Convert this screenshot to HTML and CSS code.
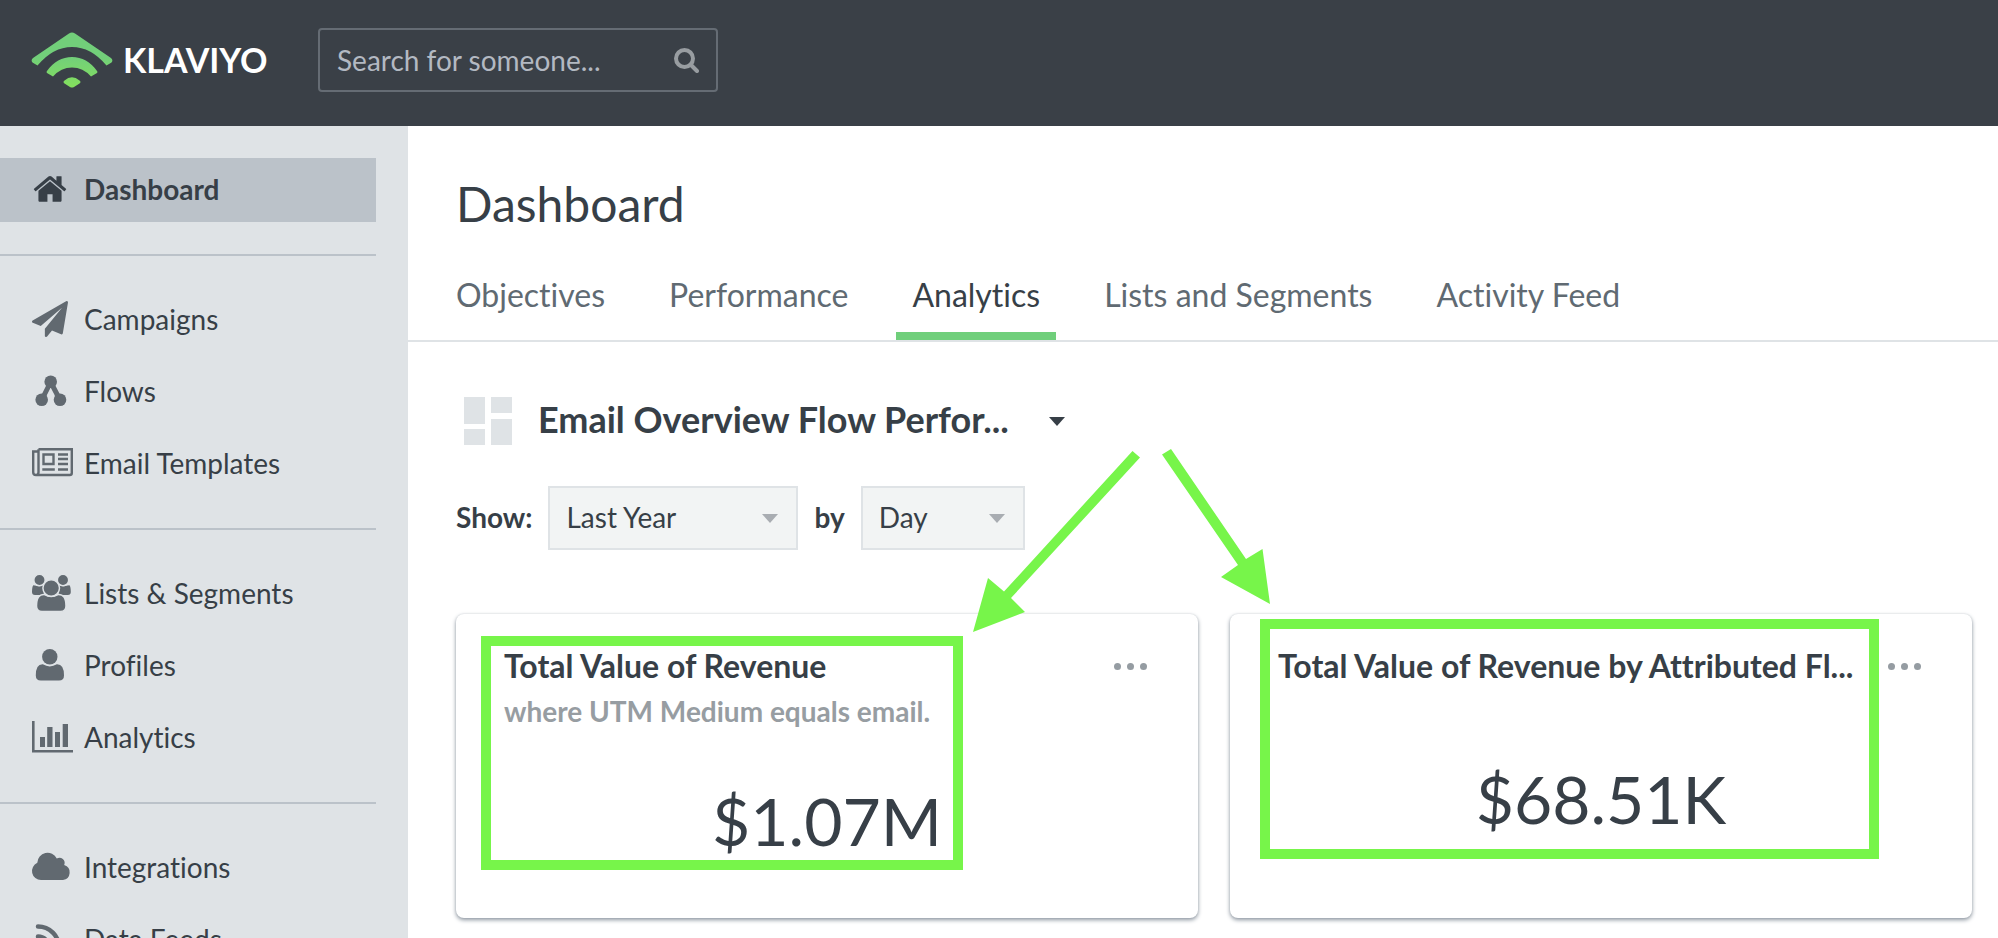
FILE: index.html
```html
<!DOCTYPE html>
<html lang="en">
<head>
<meta charset="utf-8">
<title>Dashboard | Klaviyo</title>
<link rel="stylesheet" href="styles.css">
</head>
<body>
<div class="app">
  <header class="topbar">
    <a class="brand" href="#">
      <svg class="brand-mark" viewBox="0 0 82 56" aria-hidden="true">
        <defs>
          <linearGradient id="mark" x1="0" y1="0" x2="0" y2="56" gradientUnits="userSpaceOnUse">
            <stop offset="0.45" stop-color="#72cf7a"/>
            <stop offset="1" stop-color="#84e05c"/>
          </linearGradient>
        </defs>
        <g fill="url(#mark)">
          <path d="M38 1.500Q41 -0.500 44 1.500L80 26Q82.500 28 80.500 30.500L75.500 33.500Q60 15 41 15Q22 15 6.500 33.500L1.500 30.500Q-0.500 28 2 26Z"/>
          <path d="M16 39Q26 25 41 25Q56 25 66 39Q67 40 66 41L60 44.500Q52 35.500 41 35.500Q30 35.500 22 44.500L16 41Q15 40 16 39Z"/>
          <path d="M33.500 48.500Q41 42 48.500 48.500Q50.500 50 48.500 51.500L43 55Q41 56 39 55L33.500 51.500Q31.500 50 33.500 48.500Z"/>
        </g>
      </svg>
      <span class="brand-name">KLAVIYO</span>
    </a>
    <form class="search">
      <input class="search-input" type="text" placeholder="Search for someone..." aria-label="Search for someone">
      <button class="search-button" type="button" aria-label="Search">
        <svg viewBox="0 0 25 25" width="25" height="25"><circle cx="10.500" cy="10.500" r="8.500" fill="none" stroke="currentColor" stroke-width="4"/><path d="M17 17l6 6" stroke="currentColor" stroke-width="4" stroke-linecap="round"/></svg>
      </button>
    </form>
  </header>

  <div class="body">
    <nav class="sidebar">
      <ul class="nav-group">
        <li><a class="nav-item active" href="#">
          <svg class="icon" viewBox="0 0 42 36"><path transform="scale(.02009)" d="M1472 992v480q0 26-19 45t-45 19h-384v-384h-256v384h-384q-26 0-45-19t-19-45v-480q0-1 .5-3t.5-3l575-474 575 474q1 2 1 6zm223-69l-62 74q-8 9-21 11h-3q-13 0-21-7l-692-577-692 577q-12 8-24 7-13-2-21-11l-62-74q-8-10-7-23.500t11-21.500l719-599q32-26 76-26t76 26l244 204v-195q0-14 9-23t23-9h192q14 0 23 9t9 23v408l219 182q10 8 11 21.500t-7 23.500z"/></svg>
          Dashboard</a></li>
      </ul>
      <ul class="nav-group">
        <li><a class="nav-item" href="#">
          <svg class="icon" viewBox="0 0 42 36"><path transform="scale(.02009)" d="M1764 11q33 24 27 64l-256 1536q-5 29-32 45-14 8-31 8-11 0-24-5l-453-185-242 295q-18 23-49 23-13 0-22-4-19-7-30.500-23.500t-11.500-36.500v-349l864-1059-1069 925-395-162q-37-14-40-55-2-40 32-59l1664-960q15-9 32-9 20 0 36 11z"/></svg>
          Campaigns</a></li>
        <li><a class="nav-item" href="#">
          <svg class="icon" viewBox="0 0 42 36"><path d="M9.700 27L18.700 9L28 27" fill="none" stroke="currentColor" stroke-width="5"/><circle cx="18.700" cy="8.700" r="6.300"/><circle cx="9.700" cy="26.700" r="6.300"/><circle cx="28" cy="26.700" r="6.300"/></svg>
          Flows</a></li>
        <li><a class="nav-item" href="#">
          <svg class="icon" viewBox="0 0 42 36"><g fill="none" stroke="currentColor" stroke-width="2.400"><path d="M6.500 4.200H39.800V28a2 2 0 0 1-2 2H4a2.800 2.800 0 0 1-2.800-2.800V6.500H6.500M6.500 4.200V27.200A2.800 2.800 0 0 1 4 30"/><path d="M11.500 9.500h10v9.500h-10zM26 9.500h10M26 14h10M26 19h10M10.300 24.500h12.500M26 24.500h10"/></g></svg>
          Email Templates</a></li>
      </ul>
      <ul class="nav-group">
        <li><a class="nav-item" href="#">
          <svg class="icon" viewBox="0 0 42 36"><g stroke="#dfe3e6" stroke-width="1.500"><path stroke="none" d="M3 10.500q4 1.500 8-.3l1 9.800H3q-3 0-3-3 0-5 1.300-6.800zM35.500 10.500q-4 1.500-8-.3l-1 9.800h9.300q3 0 3-3 0-5-1.300-6.800z"/><circle cx="7.500" cy="5" r="5.700"/><circle cx="31" cy="5" r="5.700"/><path d="M12.500 19.500q6.700 4 13.500 0 8-.5 8 11.500 0 5.500-5.500 5.500H10q-5.500 0-5.500-5.500 0-12 8-11.500z"/><circle cx="19.200" cy="13" r="8.300"/></g></svg>
          Lists &amp; Segments</a></li>
        <li><a class="nav-item" href="#">
          <svg class="icon" viewBox="0 0 42 36"><circle cx="17.800" cy="9.700" r="7.700"/><path d="M10.800 17.300q7 4.200 14 0 7.200-.3 7.200 11.200 0 5-5 5H8.800q-5 0-5-5 0-11.500 7-11.200z"/></svg>
          Profiles</a></li>
        <li><a class="nav-item" href="#">
          <svg class="icon" viewBox="0 0 42 36"><path d="M0 2h2.600v29H41v2.600H0zM8 18h5v10H8zM15.200 8h5.300v20h-5.300zM23 13h5v15h-5zM30.700 5h5.300v23h-5.300z"/></svg>
          Analytics</a></li>
      </ul>
      <ul class="nav-group">
        <li><a class="nav-item" href="#">
          <svg class="icon" viewBox="0 0 42 36"><path d="M9 31a9 9 0 0 1-3.700-17.200A10.300 10.300 0 0 1 24.800 9.500a5.200 5.200 0 0 1 7.400 6.500A7.700 7.700 0 0 1 31 31z"/></svg>
          Integrations</a></li>
        <li><a class="nav-item" href="#">
          <svg class="icon" viewBox="0 0 42 36"><g fill="none" stroke="currentColor" stroke-width="4.500" stroke-linecap="round"><path d="M6 5.500A21 21 0 0 1 27 26.500M6 15.500A11 11 0 0 1 17 26.500"/></g><circle cx="7.500" cy="25" r="3.500"/></svg>
          Data Feeds</a></li>
      </ul>
    </nav>

    <main class="main">
      <h1 class="page-title">Dashboard</h1>
      <nav class="tabs">
        <a class="tab" href="#">Objectives</a>
        <a class="tab" href="#">Performance</a>
        <a class="tab selected" href="#">Analytics</a>
        <a class="tab" href="#">Lists and Segments</a>
        <a class="tab" href="#">Activity Feed</a>
      </nav>
      <div class="content">
        <button class="board-picker" type="button">
          <svg class="board-icon" viewBox="0 0 48 48"><path d="M0 0h21v27H0zM0 32h21v16H0zM27 0h21v16H27zM27 22h21v26H27z"/></svg>
          <span class="board-name">Email Overview Flow Perfor...</span>
          <svg class="caret" viewBox="0 0 16 9"><path d="M0 0h16L8 9z"/></svg>
        </button>
        <div class="filters">
          <label for="range">Show:</label>
          <span class="select range"><select id="range"><option>Last Year</option></select><svg class="caret" viewBox="0 0 16 9"><path d="M0 0h16L8 9z"/></svg></span>
          <label for="unit">by</label>
          <span class="select unit"><select id="unit"><option>Day</option></select><svg class="caret" viewBox="0 0 16 9"><path d="M0 0h16L8 9z"/></svg></span>
        </div>
        <div class="cards">
          <section class="card">
            <header class="card-head">
              <h2 class="card-title">Total Value of Revenue</h2>
              <button class="more" type="button" aria-label="More options"><i></i><i></i><i></i></button>
            </header>
            <p class="card-sub">where UTM Medium equals email.</p>
            <p class="value">$1.07M</p>
            <div class="highlight first"></div>
          </section>
          <section class="card">
            <header class="card-head">
              <h2 class="card-title">Total Value of Revenue by Attributed Fl...</h2>
              <button class="more" type="button" aria-label="More options"><i></i><i></i><i></i></button>
            </header>
            <p class="value">$68.51K</p>
            <div class="highlight second"></div>
          </section>
          <svg class="arrows" viewBox="968 445 308 192" aria-hidden="true">
            <path d="M1132.500 451L1140 457.500L1011 598L1025 612L973 632L988 578L1004 591.500Z"/>
            <path d="M1162 454.500L1171 449L1246 559L1262.500 549L1270 604L1221 577L1238 565Z"/>
          </svg>
        </div>
      </div>
    </main>
  </div>
</div>
</body>
</html>
```

FILE: styles.css
```css
* { box-sizing: border-box; }

body {
  margin: 0;
  font-family: Lato, "Open Sans", sans-serif;
  font-size: 28px;
  font-variant-ligatures: none;
  color: #373f47;
  background: #fff;
}

a { color: inherit; text-decoration: none; }
h1, h2, p, ul { margin: 0; padding: 0; }
ul { list-style: none; }
button, input, select { font: inherit; color: inherit; }
button { border: 0; padding: 0; background: none; cursor: pointer; }

.app {
  display: flex;
  flex-direction: column;
  height: 100vh;
  overflow: hidden;
}

.topbar {
  display: flex;
  flex: none;
  align-items: flex-start;
  height: 126px;
  padding: 28px 31px;
  background: #3a4047;
}

.brand {
  display: flex;
  align-items: center;
  gap: 10px;
  width: 287px;
  height: 64px;
  color: #fff;
}
.brand-mark { width: 82px; height: 56px; }
.brand-name { font-size: 34px; font-weight: 700; line-height: 40px; }

.search {
  display: flex;
  align-items: center;
  width: 400px;
  height: 64px;
  border: 2px solid #656c74;
  border-radius: 4px;
  padding: 0 17px;
}
.search-input {
  flex: 1;
  min-width: 0;
  border: 0;
  padding: 0;
  background: none;
  outline: 0;
}
.search-input::placeholder { color: #b3b9c2; opacity: 1; }
.search-button { display: flex; color: #989da1; }

.body { display: flex; flex: 1; min-height: 0; }

.sidebar {
  flex: none;
  width: 408px;
  padding: 32px 32px 0 0;
  background: #dfe3e6;
  overflow: hidden;
}
.nav-group {
  display: flex;
  flex-direction: column;
  gap: 8px;
  padding-bottom: 32px;
}
.nav-group + .nav-group { border-top: 2px solid #bbc2c9; padding-top: 32px; }
.nav-item {
  display: flex;
  align-items: center;
  gap: 10px;
  height: 64px;
  padding: 0 0 2px 32px;
}
.nav-item.active { background: #bbc2c9; font-weight: 700; }
.icon { width: 42px; height: 36px; fill: currentColor; color: #616970; overflow: visible; }
.active .icon { color: #373f47; }

.main { flex: 1; min-width: 0; overflow: hidden; }
.page-title {
  padding: 46px 48px 0;
  font-size: 48px;
  font-weight: 400;
  line-height: 64px;
}
.tabs {
  display: flex;
  gap: 32px;
  height: 106px;
  padding: 39px 32px 0;
  border-bottom: 2px solid #dfe3e6;
  font-size: 32px;
  line-height: 40px;
  color: #606a72;
}
.tab { padding: 0 16px; }
.tab.selected { color: #373f47; border-bottom: 8px solid #70cf7b; }

.content { padding: 48px 26px 0 48px; }
.board-picker {
  display: flex;
  align-items: center;
  height: 62px;
  padding-left: 8px;
  font-size: 36px;
  font-weight: 700;
}
.board-icon { width: 48px; height: 48px; margin-right: 26px; fill: #dfe3e6; }
.board-name { padding-bottom: 4px; }
.board-picker .caret { margin-left: 40px; }
.caret { width: 16px; height: 9px; fill: #373f47; }

.filters {
  display: flex;
  align-items: center;
  gap: 16px;
  margin-top: 34px;
}
.filters label { padding-bottom: 2px; font-weight: 700; }
.select { position: relative; height: 64px; }
.select select {
  appearance: none;
  width: 100%;
  height: 100%;
  padding: 0 16px 2px;
  border: 2px solid #dfe3e6;
  border-radius: 0;
  background: #f2f4f4;
}
.select .caret {
  position: absolute;
  right: 20px;
  top: 28px;
  fill: #a9adb2;
  pointer-events: none;
}
.range { width: 250px; }
.unit { width: 164px; }

.cards {
  position: relative;
  display: grid;
  grid-template-columns: 1fr 1fr;
  gap: 32px;
  margin-top: 64px;
}
.card {
  position: relative;
  height: 304px;
  padding: 32px 48px;
  border-radius: 8px;
  background: #fff;
  box-shadow: 0 2px 4px #8d96a0, 0 0 2px #dfe3e6;
}
.card-head {
  display: flex;
  align-items: center;
  justify-content: space-between;
  height: 40px;
}
.card-title { padding-bottom: 2px; font-size: 32px; font-weight: 700; white-space: nowrap; }
.more { display: flex; flex: none; gap: 6px; padding: 8px 3px 8px 0; }
.more i { width: 7px; height: 7px; border-radius: 50%; background: #959ca2; }
.card-sub { padding-top: 2px; font-size: 28px; font-weight: 700; line-height: 46px; color: #979da2; }
.value {
  padding-top: 71px;
  font-size: 66px;
  line-height: 84px;
  text-align: center;
}
.card-sub + .value { padding-top: 45px; }

.highlight { position: absolute; border: 10px solid #77f54a; pointer-events: none; }
.highlight.first { left: 25px; top: 22px; width: 482px; height: 234px; }
.highlight.second { left: 30px; top: 5px; width: 619px; height: 240px; }

.arrows {
  position: absolute;
  left: 512px;
  top: -169px;
  width: 308px;
  height: 192px;
  fill: #77f54a;
  pointer-events: none;
}
```
